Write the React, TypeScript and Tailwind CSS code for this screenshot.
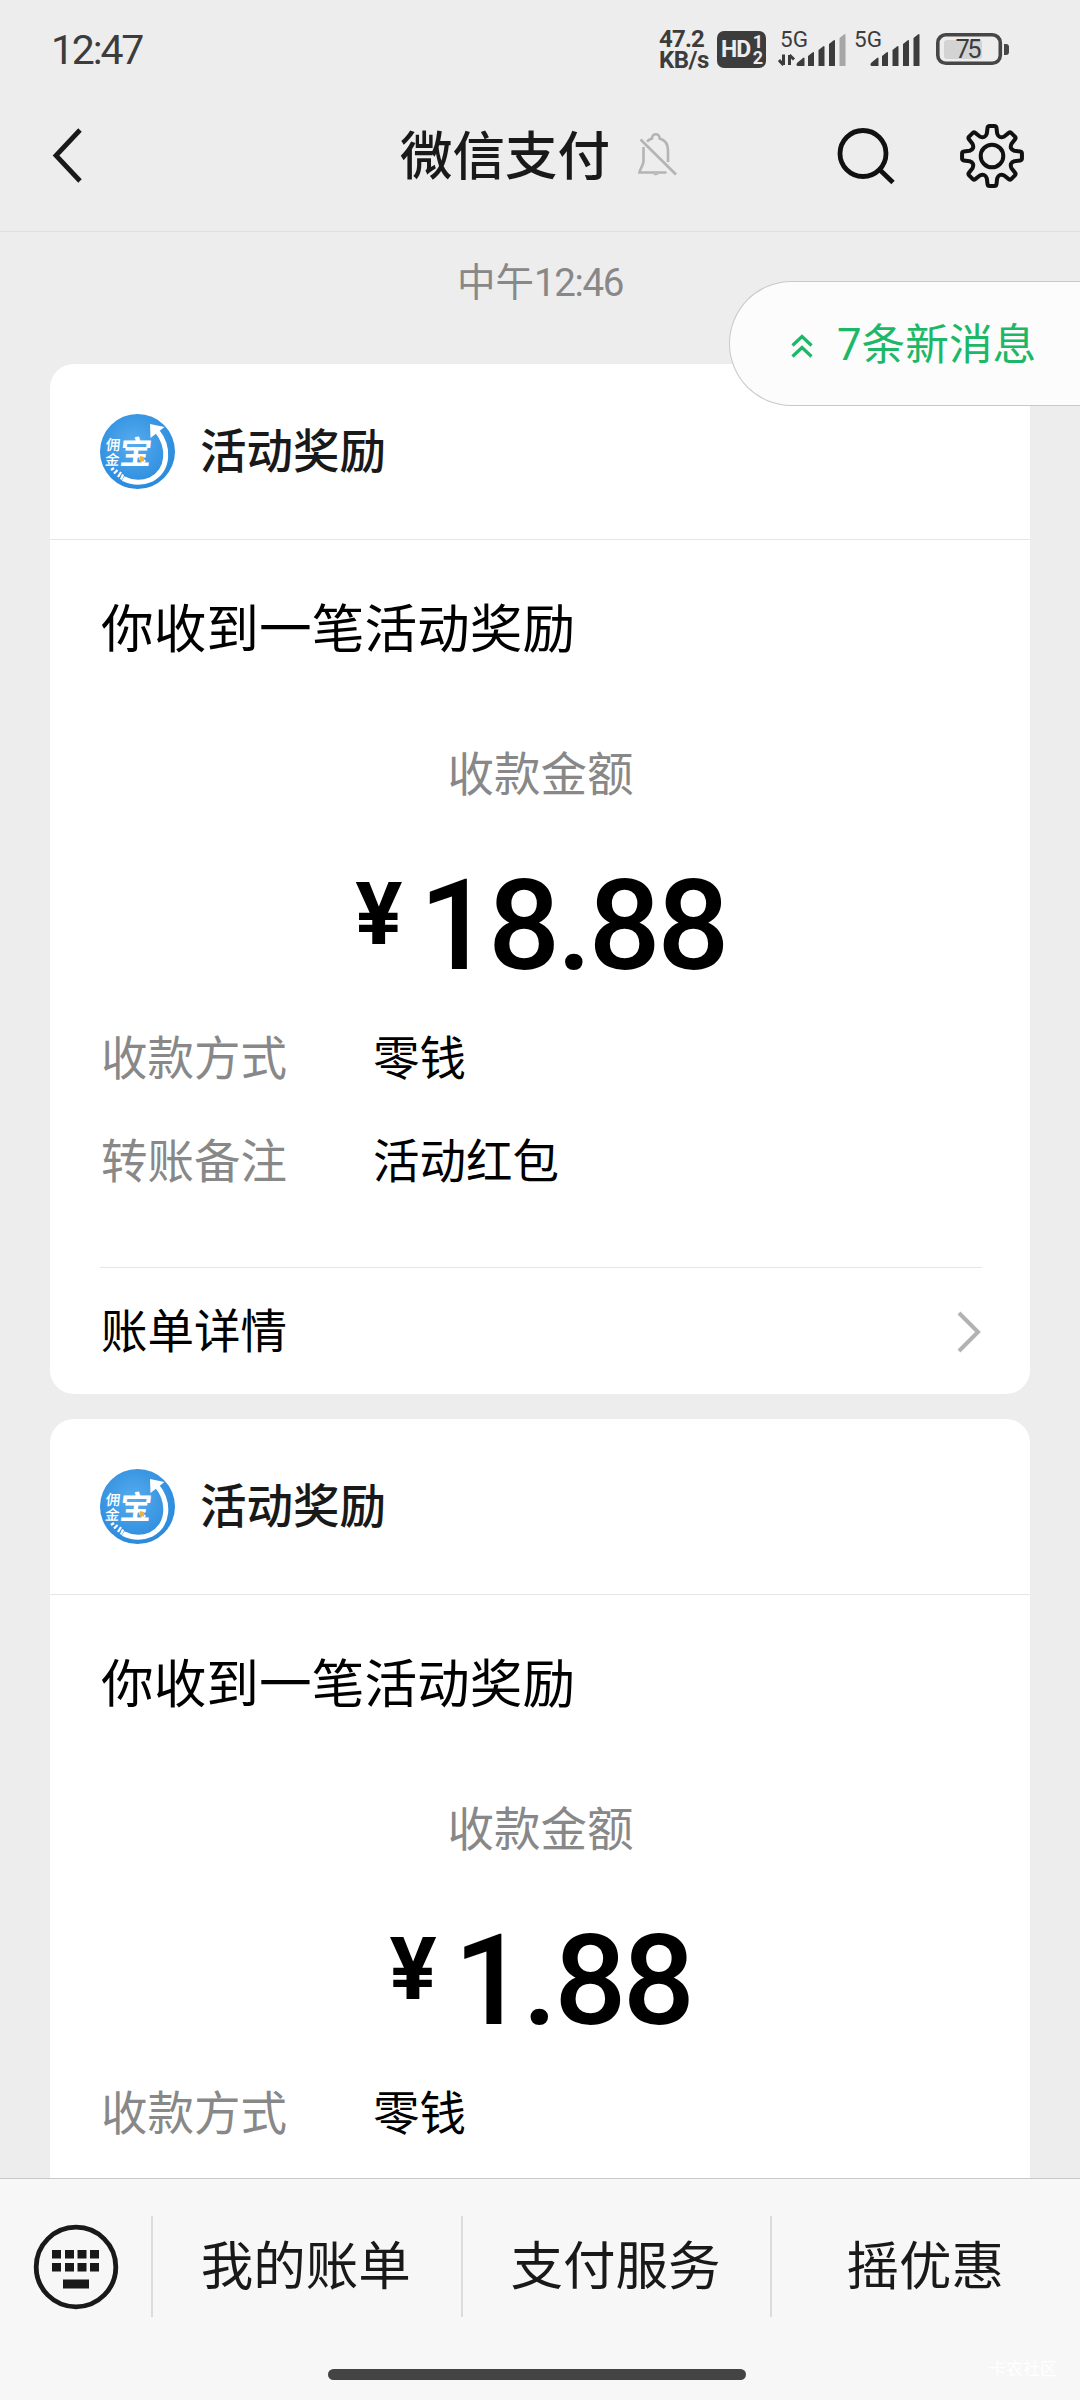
import type { ReactNode } from "react";

const rewards = [
  { id: 1, amount: "18.88", method: "零钱", note: "活动红包" },
  { id: 2, amount: "1.88", method: "零钱", note: "活动红包" },
];

export default function App() {
  return (
    <div className="relative flex h-[2400px] w-[1080px] flex-col overflow-hidden bg-[#ededed] font-['Roboto','Noto_Sans_CJK_SC',sans-serif] text-black">
      <StatusBar />
      <Header />

      <main className="min-h-0 flex-1 overflow-hidden px-[50px]">
        <div className="flex h-[132px] justify-center pt-[31px] text-[38.500px] leading-[40px] text-[#888888]">
          <span>中午</span>
          <span className="tracking-[-1.400px]">12:46</span>
        </div>
        <div className="flex flex-col gap-[25px]">
          {rewards.map((reward) => (
            <RewardCard
              key={reward.id}
              amount={reward.amount}
              method={reward.method}
              note={reward.note}
            />
          ))}
        </div>
      </main>

      <BottomBar />

      <div className="absolute top-[281px] right-0 flex h-[125px] w-[351px] items-center rounded-l-full border border-r-0 border-[#c9c9c9] bg-[#fcfcfc] pl-[60px] text-[#1db867]">
        <svg className="mt-1 h-[26px] w-[24px]" viewBox="0 0 24 26" fill="none" stroke="currentColor" strokeWidth="3.200">
          <path d="M2.500 12.500 12 3.500l9.500 9M2.500 23.500 12 14.500l9.500 9" />
        </svg>
        <span className="mt-[2px] ml-[23px] text-[43.700px] leading-[60px]">7条新消息</span>
      </div>
    </div>
  );
}

function StatusBar() {
  return (
    <div className="flex h-[98px] shrink-0 items-start justify-between pr-[70px] pl-[51px] text-[#3c3c3c]">
      <span className="mt-[26px] text-[41px] leading-[48px] tracking-[-2.200px]">12:47</span>
      <div className="mt-[25px] flex items-start">
        <div className="mt-[4px] w-[58px] text-[24px] leading-[21px] font-bold">
          <div className="text-[24px] tracking-[-0.800px]">47.2</div>
          <div className="tracking-[-0.500px]">KB/s</div>
        </div>
        <div className="mt-[6px] flex h-[37px] w-[49px] items-center justify-between rounded-[7px] bg-[#3c3c3c] pr-[3px] pl-[4px] font-bold text-[#ededed]">
          <span className="text-[23px] leading-[26px] tracking-[-1px]">HD</span>
          <span className="flex flex-col text-[18px] leading-[16px]">
            <span>1</span>
            <span>2</span>
          </span>
        </div>
        <Signal className="ml-[12px]" weak />
        <Signal className="ml-[4px]" />
        <svg className="mt-[8px] ml-[14px] h-[33px] w-[74px]" viewBox="0 0 74 33">
          <rect x="1.800" y="1.800" width="62.500" height="28.500" rx="8" fill="none" stroke="#464646" strokeWidth="3.600" />
          <rect x="8" y="7" width="38" height="19" rx="3" fill="#d3d3d3" />
          <text x="32.500" y="25" fontSize="25.500" fill="#3c3c3c" textAnchor="middle" textLength="26">75</text>
          <path d="M68 11h2a3 3 0 0 1 3 3v5a3 3 0 0 1-3 3h-2z" fill="#464646" />
        </svg>
      </div>
    </div>
  );
}

function Signal({ className, weak }: { className: string; weak?: boolean }) {
  return (
    <svg className={`h-[46px] w-[70px] ${className}`} viewBox="0 -6 70 46" fill="#3c3c3c">
      <text x="2" y="16" fontSize="22.500" textLength="28">5G</text>
      {weak && (
        <path d="M5.500 23.500V34M5.500 34 1 29M11.500 34V24M11.500 24l4.500 4.500" stroke="#3c3c3c" strokeWidth="3" fill="none" />
      )}
      <path d="M19 32l6-5q1.500-1 1.500.5V35H20q-1.500 0-1.500-1.500z" />
      <path d="M30 25l4.500-3.500q1.500-1 1.500.5V35h-6z" />
      <path d="M40.500 19l4.500-3.500q1.500-1 1.500.5V35h-6z" />
      <path d="M51 13l4.500-3.500q1.500-1 1.500.5V35h-6z" />
      <path d="M61.500 7l4.500-3.500q1.500-1 1.500.5V35h-6z" fill={weak ? "#a6a6a6" : "#3c3c3c"} />
    </svg>
  );
}

function Header() {
  return (
    <header className="flex h-[134px] shrink-0 items-start border-b border-[#dfdfdf] pt-[26px] pl-[50px]">
      <svg className="mt-[3px] h-[58px] w-[34px]" viewBox="0 0 34 58" fill="none" stroke="#191919" strokeWidth="4.800">
        <path d="M30 3 6 28.500 30 54" />
      </svg>
      <h1 className="mt-[3px] ml-[316px] text-[52.500px] leading-[60px] font-medium text-[#191919]">微信支付</h1>
      <svg className="mt-[7px] ml-[27px] h-[46px] w-[42px]" viewBox="0 0 42 46" fill="none" stroke="#b4b4b4" strokeWidth="2.600">
        <path d="M10 10.500C11.500 9 13 8 15 7.500V7a3.800 3.800 0 0 1 7.600 0v.5C28 9 31 13 31 19v12M6.500 16v14c0 5-3 6-4 11.500h27M3.500 8.500 39 43.500" />
        <path d="M15.500 43h6.500l-3.200 1.600z" fill="#b4b4b4" stroke="none" />
      </svg>
      <svg className="mt-[3px] ml-[157px] h-[62px] w-[62px]" viewBox="0 0 62 62" fill="none" stroke="#111111" strokeWidth="4.800">
        <circle cx="27" cy="26.500" r="23" />
        <path d="m43.500 42.500 13.500 13" />
      </svg>
      <GearIcon />
    </header>
  );
}

function GearIcon() {
  const teeth = [0, 45, 90, 135, 180, 225, 270, 315];
  const at = (radius: number, deg: number) => {
    const rad = (deg * Math.PI) / 180;
    return `${(radius * Math.sin(rad)).toFixed(2)} ${(-radius * Math.cos(rad)).toFixed(2)}`;
  };
  const outline = teeth
    .map(
      (a, i) =>
        `${i ? "L" : "M"}${at(23, a - 13)} L${at(28.5, a - 9)} Q${at(30.3, a - 8)} ${at(30, a - 4)} L${at(30, a + 4)} Q${at(30.3, a + 8)} ${at(28.5, a + 9)} L${at(23, a + 13)} Q${at(18.5, a + 22.5)} ${at(23, a + 32)}`
    )
    .join(" ");

  return (
    <svg className="-mt-[1px] ml-[61px] h-[66px] w-[66px]" viewBox="-33 -33 66 66" fill="none" stroke="#111111" strokeWidth="4" strokeLinejoin="round">
      <path d={`${outline}Z`} />
      <circle r="11.300" />
    </svg>
  );
}

function RewardCard({ amount, method, note }: { amount: string; method: string; note: string }) {
  return (
    <section className="h-[1030px] shrink-0 rounded-[24px] bg-white">
      <div className="flex h-[176px] items-center border-b border-[#e5e5e5] px-[50px]">
        <MerchantLogo />
        <h2 className="mt-px ml-[25px] text-[46.500px] leading-[60px] font-medium text-[#191919]">活动奖励</h2>
      </div>

      <div className="pt-[60px] pr-[50px] pl-[51px]">
        <p className="text-[52.700px] leading-[60px]">你收到一笔活动奖励</p>
        <p className="mt-[85px] text-center text-[46.500px] leading-[60px] text-[#888888]">收款金额</p>
        <div className="mt-[56px] flex h-[130px] items-start justify-center font-medium">
          <span className="mt-[3px] mr-[17px] text-[88px] leading-[100px] font-bold">¥</span>
          <span className="text-[127px] leading-[130px] tracking-[-3.500px]">{amount}</span>
        </div>
        <div className="mt-[38px] flex flex-col gap-[43px]">
          <DetailRow label="收款方式">{method}</DetailRow>
          <DetailRow label="转账备注">{note}</DetailRow>
        </div>
      </div>

      <div className="mr-[48px] ml-[50px] mt-[75px] flex h-[128px] items-center justify-between border-t border-[#e5e5e5] pl-px">
        <span className="text-[46.500px] leading-[60px]">账单详情</span>
        <svg className="h-[44px] w-[26px]" viewBox="0 0 26 44" fill="none" stroke="#b2b2b2" strokeWidth="4">
          <path d="m3 3 19 19L3 41" />
        </svg>
      </div>
    </section>
  );
}

function DetailRow({ label, children }: { label: string; children: ReactNode }) {
  return (
    <div className="flex text-[46.500px] leading-[60px]">
      <span className="w-[272px] text-[#888888]">{label}</span>
      <span>{children}</span>
    </div>
  );
}

function MerchantLogo() {
  return (
    <svg className="h-[75px] w-[75px]" viewBox="0 0 75 75">
      <defs>
        <radialGradient id="logo-blue" cx="45%" cy="40%" r="60%">
          <stop offset="0" stopColor="#56adee" />
          <stop offset="1" stopColor="#2b8add" />
        </radialGradient>
      </defs>
      <circle cx="37.500" cy="37.500" r="37.500" fill="url(#logo-blue)" />
      <path d="M57 17C70 33 69 56 51 65.500C42 69.500 32 69 23 64.500" fill="none" stroke="#fff" strokeWidth="5" />
      <path d="M50 10l14.500 3L50.500 24z" fill="#fff" />
      <path d="m11 56 3-2M14 59.500l3.500-3.500M18 63l3-5M21 65.500l2-5" stroke="#fff" strokeWidth="2.200" />
      <g fill="#fff" transform="skewX(-6)">
        <text x="24" y="50.500" fontSize="32" fontWeight="700">宝</text>
        <text x="9" y="36" fontSize="14.500" fontWeight="500">佣</text>
        <text x="10" y="51.500" fontSize="14.500" fontWeight="500">金</text>
      </g>
      <path d="m40 42 4 1v4.500h-4z" fill="#f0b13c" />
    </svg>
  );
}

function BottomBar() {
  return (
    <footer className="h-[222px] shrink-0 border-t border-[#c8c8c8] bg-[#f7f7f7] pt-[37px]">
      <div className="flex h-[105px] items-center text-[52.500px] leading-[60px] text-[#191919]">
        <div className="flex h-full w-[151px] items-center pl-[33px]">
          <svg className="-mt-1 h-[86px] w-[86px]" viewBox="0 0 86 86" fill="#191919">
            <circle cx="43" cy="43" r="39.800" fill="none" stroke="#191919" strokeWidth="4.800" />
            <path d="M19 26h9v8.500h-9zM32 26h9v8.500h-9zM44.500 26h9v8.500h-9zM57 26h9v8.500h-9zM19 39h9v8.500h-9zM32 39h9v8.500h-9zM44.500 39h9v8.500h-9zM57 39h9v8.500h-9zM30 55.500h26v9H30z" />
          </svg>
        </div>
        <MenuItem>我的账单</MenuItem>
        <MenuItem>支付服务</MenuItem>
        <MenuItem>摇优惠</MenuItem>
      </div>
      <div className="relative mt-[48px] pl-[328px]">
        <div className="h-[11px] w-[418px] rounded-full bg-[#444444]" />
        <span className="absolute -top-[12px] right-[23px] text-[17px] leading-[24px] text-white">卡农社区</span>
      </div>
    </footer>
  );
}

function MenuItem({ children }: { children: ReactNode }) {
  return (
    <div className="flex h-full flex-1 items-center">
      <div className="-mt-1 h-[101px] w-[2px] bg-[#dcdcdc]" />
      <span className="-mt-1 flex-1 pr-[2px] text-center">{children}</span>
    </div>
  );
}
